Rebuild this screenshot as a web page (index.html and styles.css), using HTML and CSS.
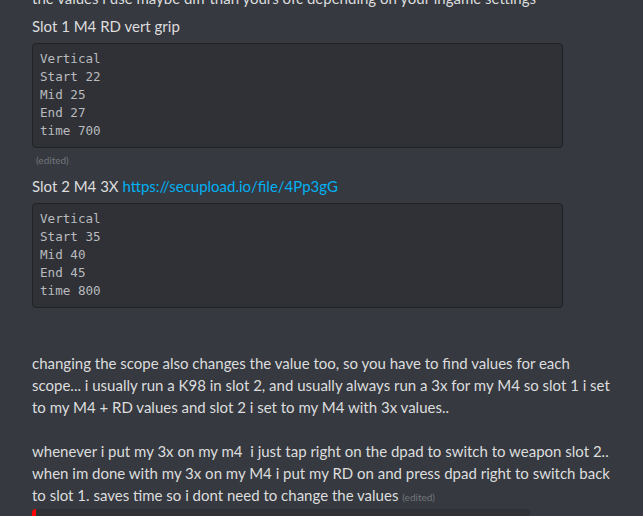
FILE: index.html
```html
<!DOCTYPE html>
<html>
<head>
<meta charset="utf-8">
<link rel="stylesheet" href="styles.css">
</head>
<body>
<div class="chat">
  <div class="msg">
    <p class="line">the values i use maybe diff than yours ofc depending on your ingame settings</p>
    <p class="line">Slot 1 M4 RD vert grip</p>
    <pre class="code">Vertical
Start 22
Mid 25
End 27
time 700</pre>
    <span class="edited edited-block">(edited)</span>
    <p class="line">Slot 2 M4 3X <a class="link" href="#">https://secupload.io/file/4Pp3gG</a></p>
    <pre class="code">Vertical
Start 35
Mid 40
End 45
time 800</pre>
  </div>
  <div class="msg msg-long">
    <p class="para">changing the scope also changes the value too, so you have to find values for each scope... i usually run a K98 in slot 2, and usually always run a 3x for my M4 so slot 1 i set to my M4 + RD values and slot 2 i set to my M4 with 3x values..</p>
    <p class="para">whenever i put my 3x on my m4&nbsp; i just tap right on the dpad to switch to weapon slot 2..<br>when im done with my 3x on my M4 i put my RD on and press dpad right to switch back to slot 1. saves time so i dont need to change the values <span class="edited">(edited)</span></p>
    <div class="embed"></div>
  </div>
</div>
</body>
</html>
```
FILE: styles.css
```css
html, body {
  margin: 0;
  padding: 0;
  background: #36393f;
  overflow: hidden;
}
body {
  width: 643px;
  height: 516px;
  font-family: "Lato", "Noto Sans", sans-serif;
  font-size: 15px;
  line-height: 22px;
  color: #dcddde;
}
.chat {
  padding-left: 32px;
  margin-top: -13px;
}
.line {
  margin: 0;
  white-space: nowrap;
}
.line + .line {
  margin-top: 6px;
}
.code {
  box-sizing: border-box;
  width: 531px;
  margin: 6px 0 0 0;
  padding: 6px 7px 7px 7px;
  background: #2f3136;
  border: 1px solid #202225;
  border-radius: 4px;
  font-family: "DejaVu Sans Mono", monospace;
  font-size: 12.6px;
  line-height: 18px;
  color: #b9bbbe;
}
.edited {
  font-size: 10px;
  line-height: 14px;
  color: #72767d;
}
.edited-block {
  display: block;
  margin: 5px 0 8px 4px;
}
.link {
  color: #00b0f4;
  text-decoration: none;
}
.msg-long {
  margin-top: 44px;
  width: 590px;
}
.para {
  margin: 0;
}
.para + .para {
  margin-top: 22px;
}
.embed {
  margin-top: 3px;
  width: 498px;
  height: 40px;
  background: #2f3136;
  border-left: 4px solid #ff0000;
  border-radius: 4px;
  box-sizing: border-box;
}
```
